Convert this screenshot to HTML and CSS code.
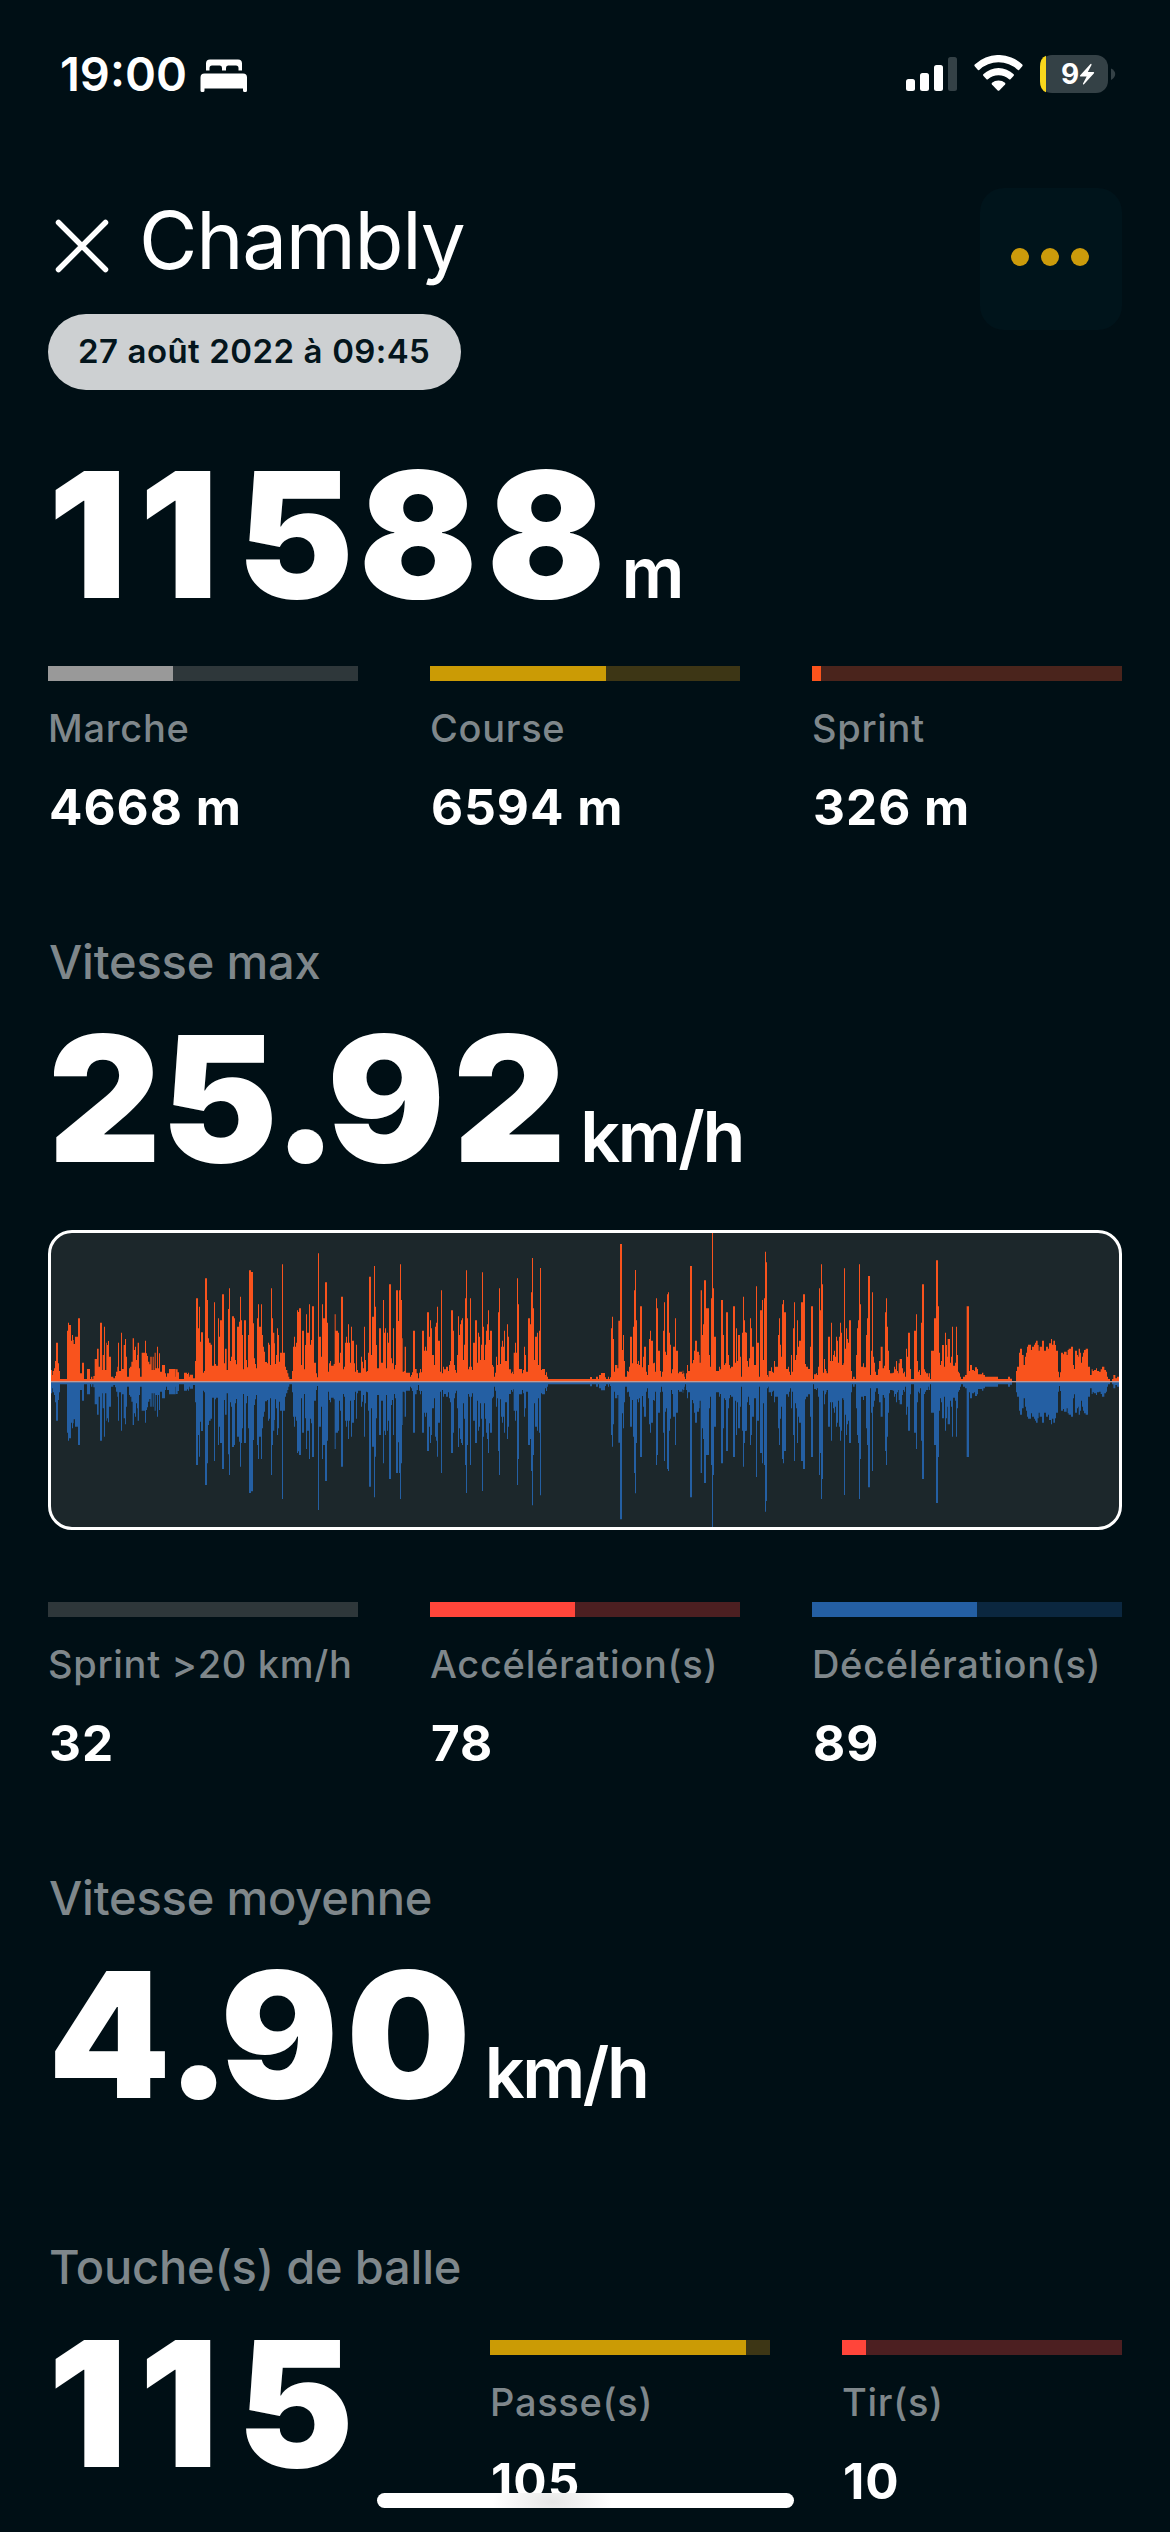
FILE: index.html
```html
<!DOCTYPE html>
<html lang="fr">
<head>
<meta charset="utf-8">
<title>Chambly</title>
<link rel="stylesheet" href="styles.css">
</head>
<body>
<div class="screen">
  <div class="status">
    <span class="time">19:00</span>
    <svg class="bed" width="48" height="34" viewBox="0 0 48 34" fill="#fff">
      <path d="M4 12V5q0-4 4-4h28q4 0 4 4v7h-3.500V9.500q0-2.500-2.500-2.500h-8q-2 0-2 2.500V12h-4V9.500q0-2.500-2-2.500h-8q-2.500 0-2.500 2.500V12z" transform="translate(2 -.5)"/>
      <path d="M.5 18.500q0-4 4-4h38.500q4 0 4 4V31.500q0 1.500-1.500 1.500h-1q-1.500 0-1.500-1.500V29.500h-38.500V31.500q0 1.500-1.500 1.500h-1q-1.500 0-1.500-1.500z"/>
    </svg>
    <span class="status-right">
      <svg width="51" height="38" viewBox="0 0 51 38">
        <rect x="0" y="24" width="9" height="12" rx="2.500" fill="#fff"/>
        <rect x="14" y="18" width="9" height="18" rx="2.500" fill="#fff"/>
        <rect x="28" y="10" width="9" height="26" rx="2.500" fill="#fff"/>
        <rect x="42" y="2" width="9" height="34" rx="2.500" fill="#344146"/>
      </svg>
      <svg width="49" height="38" viewBox="0 0 49 38" fill="#fff">
        <path d="M.7 9.500A34.500 34.500 0 0 1 48.300 9.500Q49 10.300 48.300 11.300L45.300 14.800Q44.600 15.500 43.800 14.900A28.500 28.500 0 0 0 5.200 14.900Q4.400 15.500 3.700 14.800L.7 11.300Q0 10.300 .7 9.500z"/>
        <path d="M9.300 19.200A22 22 0 0 1 39.700 19.200Q40.300 19.900 39.700 20.800L36.500 24.200Q35.800 24.900 35.100 24.300A15.700 15.700 0 0 0 13.900 24.300Q13.200 24.900 12.500 24.200L9.300 20.800Q8.700 19.900 9.300 19.200z"/>
        <path d="M18 27.800A10 10 0 0 1 31 27.800Q31.800 28.700 31.100 29.500L25.300 35.500Q24.500 36.200 23.700 35.500L17.900 29.500Q17.200 28.700 18 27.800z"/>
      </svg>
      <svg width="76" height="38" viewBox="0 0 76 38">
        <rect x="0" y="0" width="68" height="38" rx="12" fill="#344146"/>
        <path d="M6 0.800V37.200Q0 35 0 26V12Q0 3 6 .8z" fill="#f9d71c"/>
        <path d="M71 13.500Q75.200 15.500 75.200 19T71 25z" fill="#344146"/>
        <text x="21" y="29" class="battery-level">9</text>
        <path d="M50.500 9L40 20.500q-.5 1 .7 1h6L43 28.500q-.3 1.500 1 .8L54 18.200q.6-1.200-.7-1.200h-5.500L51.500 10q.2-1.600-1-1z" fill="#fff"/>
      </svg>
    </span>
  </div>

  <header class="header">
    <div>
      <div class="title-row">
        <svg width="56" height="56" viewBox="0 0 56 56" fill="none" stroke="#fff" stroke-width="5.500" stroke-linecap="round"><path d="M4.500 4.500l47 47M51.500 4.500l-47 47"/></svg>
        <h1 class="title">Chambly</h1>
      </div>
      <div class="date">27 août 2022 à 09:45</div>
    </div>
    <div class="menu"><i></i><i></i><i></i></div>
  </header>

  <div class="figure distance"><span class="number"><span class="first-one">1</span><span class="one">1</span><span class="five">5</span><span class="eight">8</span>8</span><span class="unit">m</span></div>
  <div class="stats">
    <div class="stat">
      <div class="bar grey"><div style="width:40.3%"></div></div>
      <div class="label">Marche</div>
      <div class="value">4668 m</div>
    </div>
    <div class="stat">
      <div class="bar gold"><div style="width:56.9%"></div></div>
      <div class="label">Course</div>
      <div class="value">6594 m</div>
    </div>
    <div class="stat">
      <div class="bar orange"><div style="width:2.8%"></div></div>
      <div class="label">Sprint</div>
      <div class="value">326 m</div>
    </div>
  </div>

  <h2 class="section">Vitesse max</h2>
  <div class="figure"><span class="number">2<span class="unit-digit">5</span><span class="dot">.</span><span class="nine">9</span>2</span><span class="unit">km/h</span></div>
  <div class="chart">
    <svg width="1068" height="294" viewBox="63 69 3204 882" preserveAspectRatio="none">
      <path id="accel" fill="#f9531d"/>
      <path id="decel" fill="#245fa3"/>
      <rect x="63" y="513" width="3204" height="4" fill="#c09a98"/>
    </svg>
  </div>
  <div class="stats after-chart">
    <div class="stat">
      <div class="bar grey"></div>
      <div class="label">Sprint &gt;20 km/h</div>
      <div class="value">32</div>
    </div>
    <div class="stat">
      <div class="bar red"><div style="width:46.9%"></div></div>
      <div class="label">Accélération(s)</div>
      <div class="value">78</div>
    </div>
    <div class="stat">
      <div class="bar blue"><div style="width:53.2%"></div></div>
      <div class="label">Décélération(s)</div>
      <div class="value">89</div>
    </div>
  </div>

  <h2 class="section">Vitesse moyenne</h2>
  <div class="figure"><span class="number"><span class="unit-digit">4</span><span class="dot">.</span><span class="nine">9</span>0</span><span class="unit">km/h</span></div>

  <h2 class="section touches-title">Touche(s) de balle</h2>
  <div class="touches">
    <div class="figure"><span class="number"><span class="first-one">1</span><span class="one">1</span>5</span></div>
    <div class="stats">
      <div class="stat">
        <div class="bar gold"><div style="width:91.3%"></div></div>
        <div class="label">Passe(s)</div>
        <div class="value">105</div>
      </div>
      <div class="stat">
        <div class="bar red"><div style="width:8.7%"></div></div>
        <div class="label">Tir(s)</div>
        <div class="value">10</div>
      </div>
    </div>
  </div>
  <div class="home"></div>
</div>
<script src="waveform.js"></script>
</body>
</html>
```
FILE: styles.css
```css
* { box-sizing: border-box; margin: 0; padding: 0; }
body { background: #000f15; }
.screen {
  position: relative;
  width: 1170px;
  height: 2532px;
  overflow: hidden;
  padding: 46px 48px 0;
  background: #000f15;
  color: #fff;
  font-family: Inter, "Liberation Sans", sans-serif;
}
svg { display: block; flex: none; }

.status { display: flex; align-items: center; height: 56px; padding-left: 12px; }
.time { font-size: 47px; font-weight: 600; line-height: 56px; }
.bed { margin-left: 13px; margin-top: 3px; }
.status-right { display: flex; margin-left: auto; gap: 17px; margin-right: 6px; }
.battery-level { font: 700 28px Inter, sans-serif; fill: #fff; }

.header { display: flex; justify-content: space-between; align-items: flex-start; margin-top: 86px; }
.title-row { display: flex; align-items: center; height: 96px; margin: 4px 0 26px 6px; }
.title-row svg { margin-top: 12px; }
.title { margin-left: 29px; font-size: 80px; font-weight: 400; line-height: 96px; letter-spacing: -1.3px; }
.date {
  width: 413px;
  height: 76px;
  padding-left: 30px;
  border-radius: 38px;
  background: #cdd0d2;
  color: #04151c;
  font-size: 33px;
  font-weight: 600;
  line-height: 74px;
  letter-spacing: .4px;
  word-spacing: .5px;
  white-space: nowrap;
}
.menu {
  display: flex;
  justify-content: center;
  align-items: center;
  gap: 12px;
  width: 142px;
  height: 142px;
  padding: 0 2px 4px 0;
  border-radius: 24px;
  background: #00141b;
}
.menu i { width: 18px; height: 18px; border-radius: 50%; background: #cc9b0b; }

.figure { display: flex; align-items: baseline; height: 180px; line-height: 180px; white-space: nowrap; }
.header + .figure { margin-top: 54px; }
.number { font-size: 175px; font-weight: 900; }
.first-one { letter-spacing: 12px; }
.one { letter-spacing: 19px; }
.five { letter-spacing: 5px; }
.eight { letter-spacing: 9px; }
.unit-digit { letter-spacing: -5px; }
.dot { letter-spacing: -11px; }
.nine { letter-spacing: 8px; }
.unit { margin-left: 14px; font-size: 70px; font-weight: 600; letter-spacing: -2.4px; }
.distance .unit { margin-left: 16px; }

.stats { display: grid; grid-template-columns: repeat(3, 310px); column-gap: 72px; margin-top: 42px; }
.after-chart { margin-top: 72px; }
.bar { height: 15px; }
.bar div { height: 15px; }
.grey { background: #2e373a; }
.grey div { background: #999; }
.gold { background: #3d3615; }
.gold div { background: #cb9b05; }
.orange { background: #4a241c; }
.orange div { background: #fb531c; }
.red { background: #4c1f21; }
.red div { background: #ff453a; }
.blue { background: #0b273f; }
.blue div { background: #245fa3; }
.label {
  margin-top: 24px;
  color: #7f878b;
  font-size: 38px;
  font-weight: 540;
  line-height: 46px;
  letter-spacing: .7px;
  white-space: nowrap;
}
.value { margin-top: 26px; padding-left: 1px; font-size: 49.5px; font-weight: 700; line-height: 60px; letter-spacing: 1px; white-space: nowrap; }

.section { margin: 97px 0 18px; padding-left: 1px; color: #7f878b; font-size: 47px; font-weight: 540; line-height: 56px; letter-spacing: -.2px; }
.chart { height: 300px; margin-top: 42px; border: 3px solid #fff; border-radius: 24px; background: #1c272b; overflow: hidden; }

.touches-title { margin-top: 115px; }
.touches { display: flex; justify-content: space-between; }
.touches .stats { grid-template-columns: repeat(2, 280px); margin-top: 27px; }

.home {
  position: absolute;
  left: 377px;
  top: 2493px;
  width: 417px;
  height: 15px;
  border-radius: 8px;
  background: radial-gradient(ellipse 60px 26px at 42% 60%, #e6e6e6, #fff);
}
```
FILE: waveform.js
```js
// Speed envelope in thirds of a pixel: "top,end" steps, three stretches of the match.
const BASE = 515;
const stretches = [
  [0, `480,66;495,68;483,72;475,75;453,78;398,84;460,87;483,90;507,111;362,114;338,117;345,123;392,126;375,129;390,131;402,135;380,144;325,150;490,156;458,162;507,171;477,180;507,183;500,187;507,190;498,194;447,201;416,206;470,210;338,216;480,218;435,222;350,225;480,229;398,231;405,234;393,237;440,243;500,250;505,255;498,258;485,262;470,264;398,267;483,273;368,276;477,281;405,285;387,288;440,291;500,297;475,300;470,304;455,308;385,312;420,315;410,318;450,321;435,323;398,327;475,330;500,335;428,345;392,348;430,351;438,354;455,358;463,361;440,365;480,368;440,371;480,374;428,377;475,381;410,384;475,387;430,390;485,396;465,405;490,408;500,411;490,417;477,437;500,438;478,443;487,447;507,462;488,471;492,474;488,477;500,479;494,489;505,495;453,498;265,504;355,507;290,510;395,513;367,519;488,522;483,525;205,531;270,534;385,537;398,542;404,546;467,552;277,555;462,558;467,564;325,567;380,570;331,576;253,582;460,585;416,590;480,594;297,597;235,600;453,603;440,606;319,612;325,615;450,618;463,621;350,627;335,630;260,633;331,636;375,639;478,642;331,648;450,651;472,654;375,657;181,663;186,669;340,672;445,675;462,678;475,681;325,684;283,687;350,693;283,696;375,699;410,702;425,705;456,711;460,714;398,717;404,720;465,723;235,726;325,729;368,733;400,735;462,738;435,741;355,744;375,747;455,750;428,756;163,759;428,765;470,768;480,772;490,775;500,778;507,786;483,789;410,792;380,795;410,798;398,801;301,804;306,807;295,813;465,816;362,822;478,825;405,828;313,831;368,837;283,840;404,843;390,846;289,852;458,858;490,861;502,864;130,867;380,873;440,876;283,879;325,885;217,891;338,894;485,897;460,900;453,903;467,911;462,914;313,917;362,924;368,927;458,930;428,933;260,939;478,942;470,945;398,948;380,951;398,954;343,957;398,960;458,963;350,966;392,972;460,975;485,978;404,981;480,984;488,993;440,996;455,999;475,1002;350,1005;450,1008;485,1011;483,1014;428,1017;200,1023;435,1026;320,1032;168,1035;290,1038;405,1041;475,1047;355,1053;458,1059;270,1062;368,1065;355,1068;475,1071;368,1074;398,1077;223,1083;445,1086;460,1089;355,1092;478,1095;465,1098;241,1104;333,1107;241,1110`],
  [1110, `163,3;270,6;385,8;485,12;483,14;410,18;488,30;500,33;495,36;487,39;362,45;477,50;490,54;505,57;488,60;477,63;487,66;362,72;422,75;410,78;422,81;307,87;380,90;331,93;355,96;435,102;465,105;350,108;338,111;290,114;392,120;485,123;241,126;490,129;470,132;478,138;470,144;483,147;465,150;453,153;301,159;362,162;465,165;480,168;488,171;435,174;319,177;375,180;343,183;331,186;325,189;450,192;404,195;265,198;181,201;325,204;478,207;470,210;265,213;470,216;480,219;398,225;331,231;458,234;368,237;380,240;450,243;404,246;187,249;350,252;450,255;404,258;362,261;343,264;301,267;390,270;362,276;465,279;470,282;500,285;488,288;440,291;465,294;307,297;235,300;462,303;410,306;392,309;410,312;362,315;453,321;343,324;380,327;478,333;490,336;485,339;492,341;428,345;398,348;428,351;205,354;283,357;477,366;490,369;480,372;410,375;435,378;485,384;325,390;343,393;247,396;144,399;295,402;450,405;380,411;368,414;465,417;362,420;174,423;480,426;477,435;495,438;487,441;500,444;507,570;501,576;507,588;500,594;507,597;495,603;489,615;502,618;507,624;500,627;507,630;502,633;355,636;320,639;387,642;485,645;465,652;475,655;332,660;102,666;420,669;375,672;453,675;500,681;483,684;485,687;470,690;380,696;460,699;350,702;241,705;180,708;331,711;462,714;453,717;465,720;289,726;472,729;440,732;410,738;485,741;495,744;465,747;387,750;362,753;392,759;460,762;458,765;485,768;265,771;295,774;422,780;483,783;500,786;485,789;362,792;277,795;425,798;435,801;253,804;247,807;368,810;404,813;490,816;478,819;410,825;325,828;422,834;490,837;485,846;492,848;482,850;490,853;500,855;507,858;490,861;465,864;483,870;168,876;460,879;450,882;422,885;392,891;425,897;435,899;458,902;241,906;375,909;343,912;211,918;295,927;435,930;470,933;265,936;69,939;235,942;380,948;483,957;470,960;478,963;270,969;375,972;465,975;460,978;307,984;435,987;465,990;475,993;470,999;289,1005;458,1008;355,1011;453,1014;375,1020;440,1023;500,1026;368,1029;260,1032;331,1035;367,1038;368,1041;453,1044;470,1047;445,1050;325,1053;355,1056;410,1062;465,1068;229,1071;398,1077;500,1080;301,1086;270,1089;450,1092;265,1095;125,1098;157,1101;495,1104;500,1106;483,1110`],
  [2220, `483,3;472,6;485,9;488,12;453,15;470,24;375,27;325,30;404,33;440,36;283,39;270,42;307,48;477,54;470,57;485,60;495,63;435,66;485,69;355,72;277,75;450,78;435,81;331,84;410,87;392,93;277,99;253,105;462,108;470,114;477,120;410,123;289,129;507,132;493,138;490,141;495,144;470,147;235,150;301,153;163,156;223,159;488,162;447,165;477,168;483,170;490,174;380,180;453,183;338,186;453,189;435,192;422,195;440,198;380,201;392,204;458,207;380,210;338,213;368,216;465,220;460,222;175,225;416,228;355,231;387,234;398,237;331,243;483,246;507,249;500,254;507,258;435,261;355,264;331,267;163,270;283,273;470,279;460,282;472,288;375,291;325,294;198,300;495,303;422,306;247,309;440,312;458,315;485,318;495,324;478,327;453,332;410,338;475,342;467,345;307,348;265,351;350,354;422,357;480,360;490,368;488,372;470,375;478,378;453,381;483,384;490,386;460,389;447,396;475,399;490,402;485,405;500,408;416,411;440,414;368,420;477,423;507,432;362,438;313,441;453,444;485,447;480,450;495,453;338,456;223,462;478,465;485,468;490,474;500,476;490,480;507,483;422,492;325,498;151,504;289,507;428,510;465,513;453,516;405,522;470,525;368,528;405,531;440,533;387,540;458,543;440,546;350,549;467,555;458,558;350,561;435,564;485,567;490,570;500,573;507,579;500,585;495,590;289,597;483,600;465,606;480,612;483,615;472,621;477,624;493,636;488,640;495,645;500,684;507,714;500,720;506,726;514,738;483,741;470,747;428,750;416,756;435,761;465,765;440,768;428,771;410,774;404,783;420,786;410,792;404,795;398,798;392,803;405,806;422,809;410,816;392,822;422,828;410,834;416,837;400,843;387,846;404,850;392,855;405,858;422,864;485,867;502,870;487,873;428,879;433,882;425,890;435,893;420,896;416,903;410,909;465,912;477,915;422,921;435,924;440,926;416,930;428,933;458,936;440,939;428,942;420,947;416,954;470,960;495,965;478,968;483,972;480,978;475,981;483,987;485,992;478,996;470,1003;480,1008;485,1011;500,1014;507,1020;514,1026;507,1030;495,1036;505,1041;500,1047`]
];

let up = `M63 ${BASE}`;
let down = up;
for (const [offset, steps] of stretches) {
  for (const step of steps.split(';')) {
    const [top, end] = step.split(',').map(Number);
    up += `V${top}H${end + offset}`;
    down += `V${2 * BASE - top}H${end + offset}`;
  }
}
document.getElementById('accel').setAttribute('d', `${up}V${BASE}Z`);
document.getElementById('decel').setAttribute('d', `${down}V${BASE}Z`);
```
